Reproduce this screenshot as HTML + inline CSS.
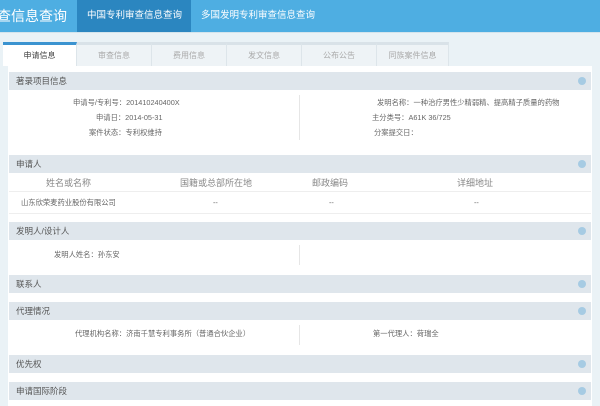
<html><head><style>
body{margin:0;width:600px;height:400px;overflow:hidden;background:#eaf2f6;font-family:"Liberation Sans","Noto Sans CJK SC",sans-serif;position:relative;font-size:8px;color:#555}
div,span{position:absolute;box-sizing:border-box}
.top{left:0;top:0;width:600px;height:32px;background:#4eaee2}
.t{color:#fff;top:0;height:32px;line-height:32px;font-size:9.5px;white-space:nowrap}
.tab{top:42px;height:24px;width:75px;line-height:22px;text-align:center;color:#aaa;background:#eef3f6;border-top:3px solid #d9e2e8;border-right:1px solid #dde5ea;font-size:8px}
.panel{left:8px;top:66px;width:584px;height:340px;background:#fff}
.h{left:9px;width:582px;height:18px;background:#dfe6ec;line-height:18px;padding-left:7px;color:#555;font-size:8.5px}
.h:after{content:"";position:absolute;right:5px;top:5px;width:8px;height:8px;border-radius:50%;background:#a6cbe3}
.r{font-size:7.3px;color:#666;white-space:nowrap}
.c{font-size:9px;color:#888;white-space:nowrap}
.v{width:1px;background:#e6e6e6}
</style></head><body>
<div class="top"></div>
<div class="t" style="left:-17px;font-size:14px">审查信息查询</div>
<div style="left:77px;top:0;width:114px;height:32px;background:#2b86c0"></div>
<div class="t" style="left:87px">中国专利审查信息查询</div>
<div class="t" style="left:201px">多国发明专利审查信息查询</div>
<div style="left:0;top:32px;width:600px;height:1px;background:#d4e4ec"></div>
<div class="tab" style="left:3px;width:74px;background:#fff;border-top-color:#3b93d0;color:#444">申请信息</div>
<div class="tab" style="left:77px">审查信息</div>
<div class="tab" style="left:152px">费用信息</div>
<div class="tab" style="left:227px">发文信息</div>
<div class="tab" style="left:302px">公布公告</div>
<div class="tab" style="left:377px;width:72px">同族案件信息</div>
<div class="panel"></div>
<div class="h" style="top:72px">著录项目信息</div>
<div class="v" style="left:299px;top:95px;height:45px"></div>
<div class="r" style="left:73px;top:98px">申请号/专利号：201410240400X</div>
<div class="r" style="left:96px;top:113px">申请日：2014-05-31</div>
<div class="r" style="left:89px;top:128px">案件状态：专利权维持</div>
<div class="r" style="left:377px;top:98px">发明名称：一种治疗男性少精弱精、提高精子质量的药物</div>
<div class="r" style="left:372px;top:113px">主分类号：A61K 36/725</div>
<div class="r" style="left:374px;top:128px">分案提交日：</div>
<div class="h" style="top:155px">申请人</div>
<div class="c" style="left:46px;top:176px">姓名或名称</div>
<div class="c" style="left:180px;top:176px">国籍或总部所在地</div>
<div class="c" style="left:312px;top:176px">邮政编码</div>
<div class="c" style="left:457px;top:176px">详细地址</div>
<div style="left:9px;top:191px;width:582px;height:1px;background:#eee"></div>
<div class="r" style="left:21px;top:198px">山东欣荣麦药业股份有限公司</div>
<div class="r" style="left:213px;top:198px">--</div>
<div class="r" style="left:329px;top:198px">--</div>
<div class="r" style="left:474px;top:198px">--</div>
<div style="left:9px;top:213px;width:582px;height:1px;background:#eee"></div>
<div class="h" style="top:222px">发明人/设计人</div>
<div class="v" style="left:299px;top:245px;height:20px"></div>
<div class="r" style="left:54px;top:250px">发明人姓名：孙东安</div>
<div class="h" style="top:275px">联系人</div>
<div class="h" style="top:302px">代理情况</div>
<div class="v" style="left:299px;top:325px;height:20px"></div>
<div class="r" style="left:75px;top:329px">代理机构名称：济南千慧专利事务所（普通合伙企业）</div>
<div class="r" style="left:373px;top:329px">第一代理人：荷瑞全</div>
<div class="h" style="top:355px">优先权</div>
<div class="h" style="top:382px">申请国际阶段</div>
</body></html>
